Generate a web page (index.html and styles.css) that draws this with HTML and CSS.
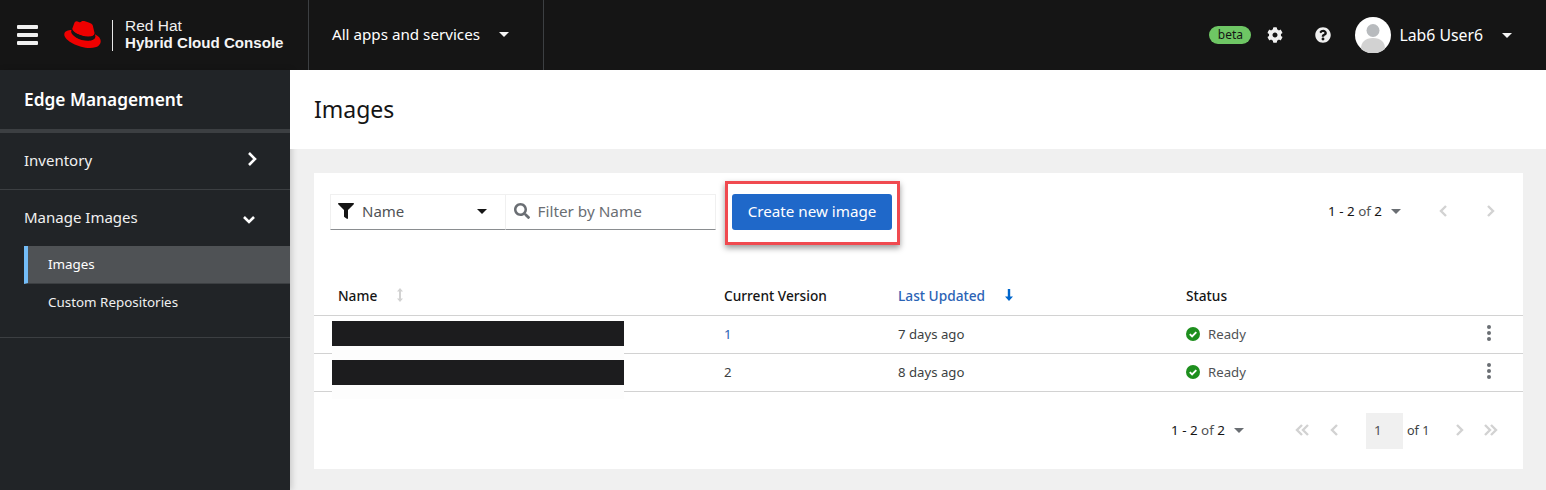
FILE: index.html
```html
<!DOCTYPE html>
<html lang="en">
<head>
<meta charset="utf-8">
<title>Images</title>
<link rel="stylesheet" href="styles.css">
</head>
<body>
<header class="topbar">
  <button class="burger" aria-label="Menu"><span></span><span></span><span></span></button>
  <div class="brand">
    <svg class="hat" viewBox="0 0 40 28" width="40" height="28">
      <path fill="#e00" d="M26.6 16c2.6 0 6.4-.5 6.4-3.6 0-.2 0-.5-.1-.7l-1.600-6.700C31 3.500 30.700 2.800 28.100 1.500 26.100.5 21.700-1 20.400-1c-1.200 0-1.600 1.600-3 1.600-1.400 0-2.400-1.200-3.700-1.200-1.300 0-2.100.8-2.700 2.600 0 0-1.800 5-2 5.700 0 .1-.1.300-.1.400 0 1.900 7.500 8.100 17.700 8.100zm6.800-2.400c.4 1.700.4 1.900.4 2.100 0 2.900-3.300 4.500-7.600 4.500C16.500 20.200 8 14.500 8 10.700c0-.6.100-1.100.3-1.600C4.800 9.300.3 9.900.3 13.900.3 20.400 15.800 28.500 28 28.500c9.400 0 11.700-4.200 11.700-7.600 0-2.600-2.300-5.600-6.300-7.300z" transform="translate(0 -.4)"/>
      <path fill="#151515" d="M33.400 13.600c.4 1.700.4 1.900.4 2.100 0 2.900-3.300 4.500-7.600 4.500C16.500 20.200 8 14.500 8 10.700c0-.6.100-1.100.3-1.600l.7-1.700c0 .1-.1.300-.1.400 0 1.900 7.500 8.100 17.700 8.100 2.600 0 6.400-.5 6.400-3.600 0-.2 0-.5-.1-.7z"/>
    </svg>
    <span class="brand-rule"></span>
    <div class="brand-text"><span class="brand-top">Red Hat</span><strong class="brand-name">Hybrid Cloud Console</strong></div>
  </div>
  <div class="apps"><span>All apps and services</span><i class="caret caret-light"></i></div>
  <div class="top-tools">
    <span class="beta">beta</span>
    <svg class="tool tool-gear" viewBox="0 0 512 512" width="16" height="16"><path fill="#f0f0f0" d="M487.400 315.700l-42.600-24.600c4.300-23.200 4.300-47 0-70.200l42.600-24.600c4.900-2.800 7.100-8.600 5.500-14-11.100-35.600-30-67.800-54.700-94.600-3.800-4.100-10-5.100-14.800-2.300L380.800 110c-17.900-15.400-38.500-27.300-60.800-35.100V25.800c0-5.600-3.900-10.500-9.400-11.700-36.700-8.200-74.300-7.800-109.200 0-5.500 1.200-9.400 6.100-9.400 11.700V75c-22.200 7.900-42.800 19.800-60.800 35.100L88.700 85.500c-4.900-2.800-11-1.900-14.800 2.300-24.700 26.700-43.600 58.900-54.700 94.600-1.700 5.400.6 11.200 5.500 14L67.300 221c-4.300 23.200-4.300 47 0 70.200l-42.600 24.600c-4.900 2.800-7.100 8.600-5.500 14 11.100 35.600 30 67.800 54.700 94.600 3.800 4.100 10 5.100 14.800 2.300l42.600-24.600c17.900 15.400 38.500 27.300 60.800 35.100v49.200c0 5.600 3.900 10.500 9.400 11.700 36.700 8.200 74.300 7.800 109.200 0 5.500-1.200 9.400-6.100 9.400-11.700v-49.200c22.200-7.900 42.800-19.800 60.800-35.100l42.600 24.600c4.900 2.800 11 1.900 14.800-2.300 24.700-26.700 43.600-58.900 54.700-94.600 1.500-5.500-.7-11.300-5.600-14.100zM256 336c-44.100 0-80-35.900-80-80s35.900-80 80-80 80 35.900 80 80-35.900 80-80 80z"/></svg>
    <svg class="tool tool-help" viewBox="0 0 512 512" width="16" height="16"><path fill="#f0f0f0" d="M504 256c0 137-111 248-248 248S8 393 8 256 119 8 256 8s248 111 248 248zM262.700 90c-54.500 0-89.300 23-116.500 63.800-3.500 5.300-2.300 12.400 2.800 16.300l34.700 26.300c5.200 3.900 12.600 3 16.700-2.100 17.900-22.700 30.100-35.800 57.300-35.800 20.400 0 45.700 13.100 45.700 32.900 0 15-12.400 22.700-32.500 34C247.300 238.500 216 254.900 216 296v4c0 6.600 5.400 12 12 12h56c6.600 0 12-5.400 12-12v-1.300c0-28.500 83.200-29.600 83.200-106.700 0-58-60.200-102-116.500-102zM256 338c-25.400 0-46 20.600-46 46 0 25.400 20.600 46 46 46s46-20.600 46-46c0-25.400-20.600-46-46-46z"/></svg>
    <svg class="avatar" viewBox="0 0 36 36" width="36" height="36"><circle cx="18" cy="18" r="18" fill="#fff"/><circle cx="18" cy="13.500" r="6.500" fill="#b8bbbe"/><path fill="#d2d2d2" d="M6 32c0-7 4-11 12-11s12 4 12 11a18 18 0 0 1-24 0z"/></svg>
    <span class="user">Lab6 User6</span>
    <i class="caret caret-light"></i>
  </div>
</header>

<div class="shell">
  <nav class="side">
    <h2 class="side-title">Edge Management</h2>
    <div class="side-group side-inventory">
      <span>Inventory</span>
      <svg class="chev chev-right" viewBox="0 0 12 16" width="12" height="16"><path d="M3 2l6 6-6 6" fill="none" stroke="#fff" stroke-width="2.600"/></svg>
    </div>
    <div class="side-group side-manage">
      <span>Manage Images</span>
      <svg class="chev chev-down" viewBox="0 0 14 10" width="14" height="10"><path d="M2 2l5 5 5-5" fill="none" stroke="#fff" stroke-width="2.600"/></svg>
    </div>
    <div class="side-sub">
      <a class="side-link side-link-active">Images</a>
      <a class="side-link">Custom Repositories</a>
    </div>
  </nav>

  <main class="main">
    <div class="page-head"><h1>Images</h1></div>
    <section class="page-body">
      <div class="card">
        <div class="toolbar">
          <div class="filter">
            <div class="filter-select">
              <svg viewBox="0 0 512 512" width="16" height="16"><path fill="#151515" d="M487.976 0H24.028C2.710 0-8.047 25.866 7.058 40.971L192 225.941V432c0 7.831 3.821 15.170 10.237 19.662l80 55.980C298.020 518.690 320 507.493 320 487.980V225.941l184.947-184.970C520.021 25.896 509.338 0 487.976 0z"/></svg>
              <span class="filter-label">Name</span>
              <i class="caret caret-dark"></i>
            </div>
            <div class="filter-input">
              <svg viewBox="0 0 512 512" width="16" height="16"><path fill="#6a6e73" d="M505 442.700L405.300 343c-4.500-4.500-10.600-7-17-7H372c27.600-35.300 44-79.700 44-128C416 93.100 322.900 0 208 0S0 93.100 0 208s93.100 208 208 208c48.300 0 92.700-16.400 128-44v16.300c0 6.400 2.500 12.500 7 17l99.700 99.700c9.400 9.400 24.600 9.400 33.900 0l28.300-28.300c9.400-9.400 9.400-24.600.1-34zM208 336c-70.700 0-128-57.200-128-128 0-70.700 57.200-128 128-128 70.700 0 128 57.200 128 128 0 70.700-57.200 128-128 128z"/></svg>
              <span>Filter by Name</span>
            </div>
          </div>
          <button class="primary">Create new image</button>
          <div class="pager-top">
            <span class="count"><b>1 - 2</b> of <b>2</b></span>
            <i class="caret caret-grey"></i>
            <svg class="pg pg-prev" viewBox="0 0 10 16" width="10" height="16"><path d="M8 3L3 8l5 5" fill="none" stroke="#d2d2d2" stroke-width="2.400"/></svg>
            <svg class="pg pg-next" viewBox="0 0 10 16" width="10" height="16"><path d="M2 3l5 5-5 5" fill="none" stroke="#d2d2d2" stroke-width="2.400"/></svg>
          </div>
        </div>

        <div class="table">
          <div class="row row-head">
            <div class="col-name">Name
              <svg class="sort-idle" viewBox="0 0 8 14" width="8" height="14"><path fill="#d2d2d2" d="M4 0l3 3.500H5v7h2L4 14l-3-3.500h2v-7H1z"/></svg>
            </div>
            <div>Current Version</div>
            <div class="col-sorted">Last Updated
              <svg class="sort-on" viewBox="0 0 10 14" width="10" height="14"><path fill="#06c" d="M5 13L1 8.500h2.800V1h2.400v7.500H9z"/></svg>
            </div>
            <div>Status</div>
            <div></div>
          </div>
          <div class="row">
            <div class="col-name"><span class="redact"></span></div>
            <div class="link">1</div>
            <div>7 days ago</div>
            <div class="status"><svg viewBox="0 0 14 14" width="14" height="14"><circle cx="7" cy="7" r="7" fill="#1e8f1e"/><path d="M3.800 7.200l2.300 2.300 4.200-4.300" fill="none" stroke="#fff" stroke-width="1.900"/></svg>Ready</div>
            <div class="kebab"><i></i><i></i><i></i></div>
          </div>
          <div class="row">
            <div class="col-name"><span class="redact"></span></div>
            <div>2</div>
            <div>8 days ago</div>
            <div class="status"><svg viewBox="0 0 14 14" width="14" height="14"><circle cx="7" cy="7" r="7" fill="#1e8f1e"/><path d="M3.800 7.200l2.300 2.300 4.200-4.300" fill="none" stroke="#fff" stroke-width="1.900"/></svg>Ready</div>
            <div class="kebab"><i></i><i></i><i></i></div>
          </div>
        </div>

        <div class="pager-bottom">
          <span class="count"><b>1 - 2</b> of <b>2</b></span>
          <i class="caret caret-grey"></i>
          <svg class="pb pb-first" viewBox="0 0 16 16" width="16" height="16"><path d="M8 3L3 8l5 5M14 3L9 8l5 5" fill="none" stroke="#d2d2d2" stroke-width="2.400"/></svg>
          <svg class="pb pb-prev" viewBox="0 0 10 16" width="10" height="16"><path d="M8 3L3 8l5 5" fill="none" stroke="#d2d2d2" stroke-width="2.400"/></svg>
          <span class="page-box">1</span>
          <span class="page-of">of 1</span>
          <svg class="pb pb-next" viewBox="0 0 10 16" width="10" height="16"><path d="M2 3l5 5-5 5" fill="none" stroke="#d2d2d2" stroke-width="2.400"/></svg>
          <svg class="pb pb-last" viewBox="0 0 16 16" width="16" height="16"><path d="M2 3l5 5-5 5M8 3l5 5-5 5" fill="none" stroke="#d2d2d2" stroke-width="2.400"/></svg>
        </div>
      </div>
      <div class="callout"></div>
    </section>
  </main>
</div>
</body>
</html>
```

FILE: styles.css
```css
* { box-sizing: border-box; }
html, body { margin: 0; height: 490px; overflow: hidden; }
body { font-family: "Noto Sans", "Open Sans", sans-serif; font-size: 14px; color: #151515; background: #f0f0f0; }
h1, h2 { margin: 0; font-weight: 400; }

.topbar { height: 70px; background: #151515; color: #fff; display: flex; align-items: center; }
.burger { width: 22px; height: 20px; margin-left: 17px; padding: 0; border: 0; background: none; display: flex; flex-direction: column; justify-content: space-between; }
.burger span { display: block; height: 4px; width: 21px; background: #f0f0f0; border-radius: 1px; }
.brand { display: flex; align-items: center; margin-left: 25px; width: 244px; }
.hat { width: 37px; height: 28px; flex: none; }
.brand-rule { width: 1px; height: 31px; background: #e8e8e8; margin-left: 11px; }
.brand-text { display: flex; flex-direction: column; margin-left: 12px; padding-bottom: 2px; font-family: "Liberation Sans", Arial, sans-serif; }
.brand-top { font-size: 15.500px; line-height: 16px; color: #f0f0f0; }
.brand-name { font-size: 15.100px; line-height: 17px; font-weight: 700; white-space: nowrap; color: #f5f5f5; }
.apps { width: 236px; height: 70px; border-left: 1px solid #3c3f42; border-right: 1px solid #3c3f42; display: flex; align-items: center; padding: 0 0 2px 23px; font-size: 15.200px; }
.apps .caret { margin-left: 19px; }
.top-tools { margin-left: auto; display: flex; align-items: center; padding-right: 34px; }
.beta { width: 42px; height: 18px; border-radius: 9px; background: #6ec664; color: #151515; font-size: 12px; line-height: 17px; text-align: center; }
.tool-gear { margin-left: 16px; }
.tool-help { margin-left: 32px; }
.avatar { margin-left: 24px; }
.user { margin-left: 8px; font-size: 15.800px; }
.top-tools .caret { margin-left: 19px; }

.caret { display: block; width: 0; height: 0; border-style: solid; border-width: 5px 5px 0; border-color: transparent; flex: none; }
.caret-light { border-top-color: #f5f5f5; }
.caret-dark { border-top-color: #151515; }
.caret-grey { border-top-color: #6a6e73; }

.shell { display: flex; height: 420px; }
.side { width: 290px; flex: none; background: #212427; color: #f0f0f0; box-shadow: 2px 0 6px rgba(0,0,0,.16); position: relative; }
.side-title { height: 59px; padding: 18px 24px 0; font-size: 17.300px; font-weight: 600; line-height: 24px; color: #fff; }
.side-group { display: flex; align-items: center; justify-content: space-between; padding: 0 24px; font-size: 15px; }
.side-inventory { height: 61px; border-top: 4px solid #3c3f42; border-bottom: 1px solid #3c3f42; padding-bottom: 3px; }
.chev-right { margin-right: 8px; margin-top: -2px; }
.side-manage { height: 56px; padding-bottom: 2px; }
.chev-down { margin-right: 10px; margin-top: 5px; }
.side-sub { height: 92px; padding: 0 0 0 24px; border-bottom: 1px solid #3c3f42; }
.side-link { display: block; height: 38px; padding-left: 24px; line-height: 37px; font-size: 13.400px; color: #f0f0f0; }
.side-link-active { background: #4f5255; border-left: 4px solid #73bcf7; padding-left: 20px; color: #fff; border-bottom: 1px solid #3c3f42; }

.main { flex: 1; min-width: 0; position: relative; }
.page-head { height: 79px; background: #fff; padding: 23px 24px 0; }
.page-head h1 { font-size: 23px; line-height: 32px; }
.page-body { padding: 24px 23px 0 24px; position: relative; }
.card { height: 296px; background: #fff; }
.toolbar { display: flex; height: 100px; padding: 21px 16px 0; align-items: flex-start; }
.filter { display: flex; height: 36px; width: 386px; }
.filter-select { width: 176px; display: flex; align-items: center; padding: 0 0 2px 7px; border: 1px solid #f0f0f0; border-bottom: 1px solid #8a8d90; }
.filter-label { margin-left: 8px; font-size: 15px; color: #4f5255; }
.filter-select .caret { margin-left: auto; margin-right: 18px; }
.filter-input { width: 211px; display: flex; align-items: center; padding: 0 0 2px 8px; border: 1px solid #f0f0f0; border-left: 0; border-bottom: 1px solid #8a8d90; color: #6a6e73; font-size: 15.300px; }
.filter-input span { margin-left: 8px; }
.primary { width: 160px; height: 36px; margin-left: 16px; background: #1f68c9; color: #fff; border: 0; border-radius: 3px; font: inherit; font-size: 15.200px; padding: 0 0 2px; }
.pager-top { margin-left: auto; height: 36px; display: flex; align-items: center; padding: 0 11px 2px 0; font-size: 13.400px; }
.pager-top .caret { margin-left: 9px; }
.count { color: #4f5255; }
.count b { font-weight: 400; color: #151515; }
.pg-prev { margin-left: 37px; }
.pg-next { margin-left: 38px; }

.table { font-size: 13.200px; }
.row { display: grid; grid-template-columns: 386px 174px 288px 1fr 68px; grid-template-rows: 1fr; height: 38px; align-items: center; border-bottom: 1px solid #d2d2d2; padding: 0 0 2px 24px; color: #3c3f42; }
.row-head { height: 43px; color: #151515; font-size: 13.700px; font-weight: 500; padding: 2px 0 0 24px; }
.col-name { position: relative; display: flex; align-items: center; }
.sort-idle { margin-left: 19px; }
.col-sorted { color: #2b63b5; display: flex; align-items: center; }
.sort-on { margin-left: 19px; }
.link { color: #2b63b5; }
.redact { display: block; width: 292px; height: 25px; margin: 0 0 0 -6px; background: #1c1c1e; box-shadow: 0 14px 0 #fdfdfd; position: relative; }
.row .col-name { height: 35px; align-self: start; padding-top: 5px; align-items: flex-start; }
.row:last-child .col-name { padding-top: 6px; }
.row-head .col-name { height: auto; align-self: center; padding-top: 0; align-items: center; }
.status { display: flex; align-items: center; gap: 8px; color: #4f5255; }
.kebab { display: flex; flex-direction: column; gap: 2px; align-items: center; width: 4px; margin-left: 32px; margin-top: -1px; }
.kebab i { display: block; width: 4px; height: 4px; border-radius: 50%; background: #6a6e73; }

.pager-bottom { display: flex; align-items: center; height: 36px; margin-top: 21px; padding: 0 0 2px 857px; font-size: 13.400px; }
.pager-bottom .caret { margin-left: 9px; }
.pb-first { margin-left: 50px; }
.pb-prev { margin-left: 19px; }
.page-box { width: 37px; height: 36px; margin: 2px 0 0 27px; background: #f0f0f0; line-height: 34px; padding-left: 8px; color: #4f5255; }
.page-of { margin-left: 4px; color: #3c3f42; font-size: 12.600px; }
.pb-next { margin-left: 26px; }
.pb-last { margin-left: 18px; }

.callout { position: absolute; left: 435px; top: 32px; width: 175px; height: 64px; border: 3px solid #f04a50; box-shadow: 0 3px 6px rgba(0,0,0,.4); pointer-events: none; }
```
